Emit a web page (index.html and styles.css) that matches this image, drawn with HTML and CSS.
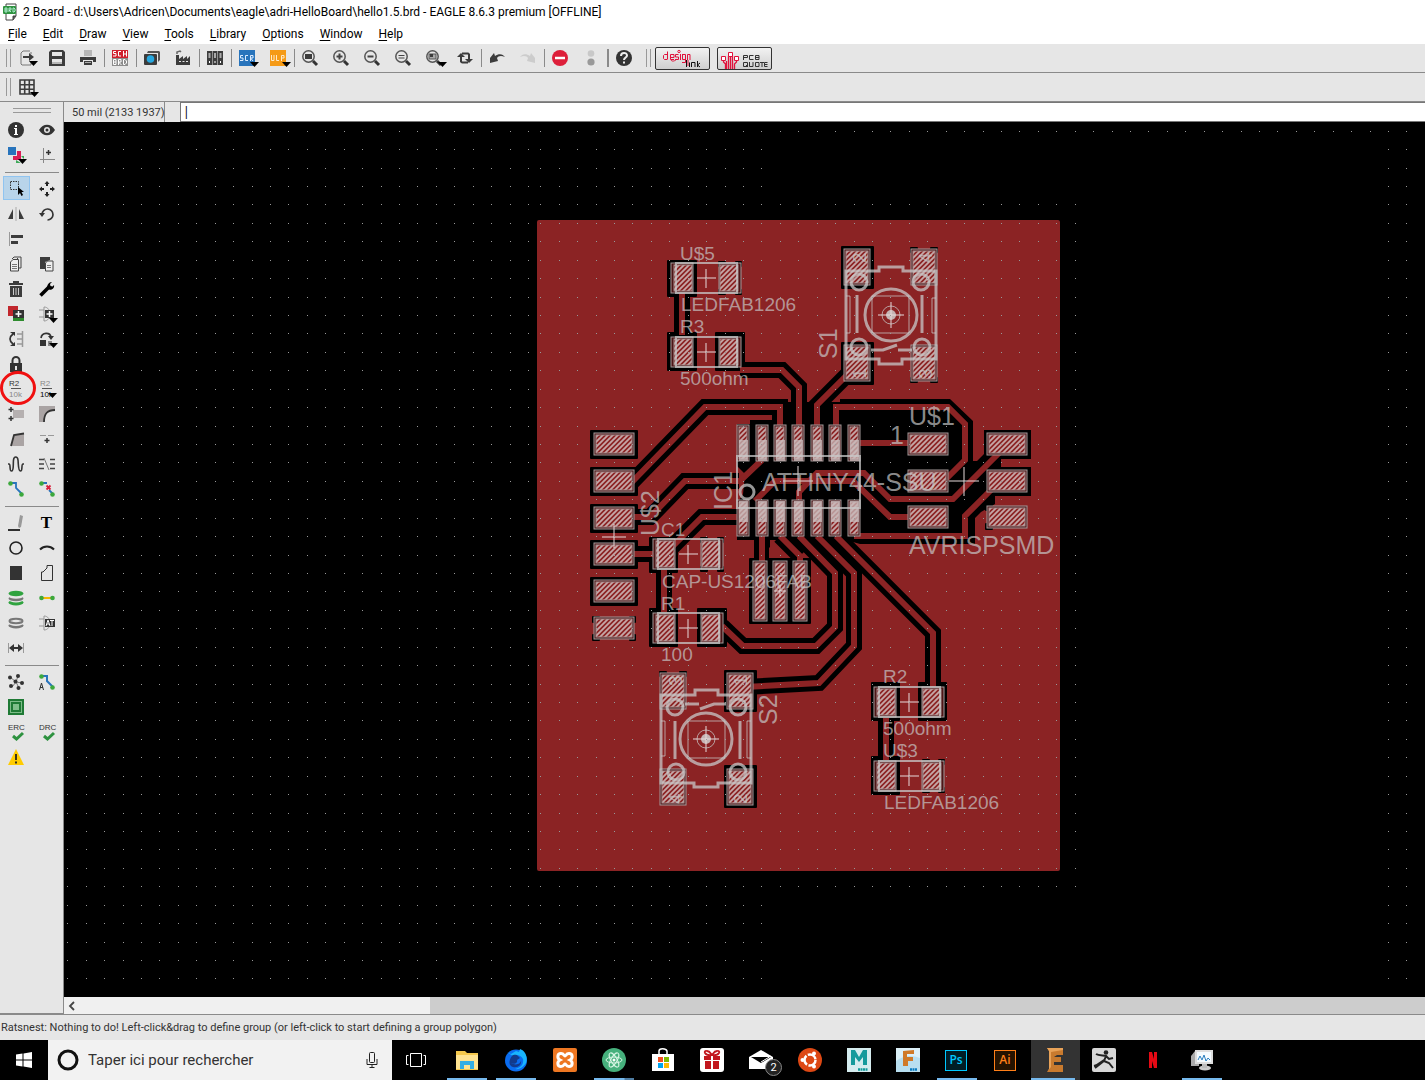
FILE: index.html
```html
<!DOCTYPE html>
<html lang="en">
<head>
<meta charset="utf-8">
<meta name="viewport" content="width=device-width, initial-scale=1">
<title>2 Board - EAGLE 8.6.3 premium</title>
<link rel="stylesheet" href="styles.css">
</head>
<body>
<div class="window">

<header class="titlebar">
  <svg class="app-icon" viewBox="0 0 16 18"><path d="M4 1h10v12l-3 4H4z" fill="#fff" stroke="#444"/><path d="M11 17v-4h3" fill="#555" stroke="#444"/><rect x="1" y="3" width="13" height="8" rx="1" fill="#2e9240"/><path d="M3 5v4M3 5h2v4H3M3 7h2M7 9V5h2v2H7l2 2M11 5h1l1 1v2l-1 1h-1z" stroke="#cfe" fill="none" stroke-width=".8"/></svg>
  <h1>2 Board - d:\Users\Adricen\Documents\eagle\adri-HelloBoard\hello1.5.brd - EAGLE 8.6.3 premium [OFFLINE]</h1>
</header>

<nav class="menubar" aria-label="Main menu">
  <button><u>F</u>ile</button><button><u>E</u>dit</button><button><u>D</u>raw</button><button><u>V</u>iew</button><button><u>T</u>ools</button><button><u>L</u>ibrary</button><button><u>O</u>ptions</button><button><u>W</u>indow</button><button><u>H</u>elp</button>
</nav>

<div class="toolbar" role="toolbar" aria-label="Actions">
  <span class="grip"></span>
  <button class="first" aria-label="Open"><svg viewBox="0 0 16 16"><path d="M10 1H3L1 3v11l1 1h9v-3M11 4V2" fill="none" stroke="#777"/><path d="M3 6h6V3l5 4-5 4V8H3z" fill="#3c3c3c"/><path d="M9 11h9l-4.500 5z" fill="#000"/></svg></button>
  <button aria-label="Save"><svg viewBox="0 0 16 16"><path d="M2 0h12l2 2v14H0V2z" fill="#3c3c3c"/><path d="M3 2h10v4H3zM3 9h10v5H3z" fill="#e6e6e6"/><path d="M3 13h10" stroke="#888"/></svg></button>
  <button aria-label="Print"><svg viewBox="0 0 16 16"><path d="M4 1h8M4 3h8M4 5h8" stroke="#888"/><path d="M0 7h16v5h-3v-2H3v2H0z" fill="#3c3c3c"/><path d="M4 11h8v4H4z" fill="#3c3c3c"/><path d="M5 12.500h6" stroke="#aaa"/></svg></button>
  <span class="sep"></span>
  <button aria-label="Schematic"><svg viewBox="0 0 16 16"><path d="M0 0h16v8H0z" fill="#d0202e"/><path d="M0 8h16v8H0z" fill="#8c8c8c"/><path d="M4 1.500H1.500v2H4v2.500H1M9 1.500H6.500V6H9M11.500 1v5.500M14.500 1v5.500M11.500 4h3M1.500 9.500v5h2.500v-5H1.500M1.500 12h2.500M6.500 15V9.500H9V12H6.500L9.500 15M11.500 9.500v5h1.500l1.500-1.500v-2L13 9.500z" fill="none" stroke="#fff"/></svg></button>
  <span class="sep"></span>
  <button aria-label="CAM processor"><svg viewBox="0 0 16 16"><path d="M4 1h11l1 1v8l-2 2V3H3z" fill="#555"/><rect x="0" y="4" width="13" height="11" rx="1" fill="#3c3c3c"/><circle cx="6.500" cy="9" r="3.800" fill="#27a8e0"/></svg></button>
  <button aria-label="Manufacturing"><svg viewBox="0 0 16 16"><path d="M1 15V5h3v4l4-3v3l4-3v3l3-3v9z" fill="#3c3c3c"/><path d="M2 4V2l3-1 1 1" fill="none" stroke="#666" stroke-width="1.500"/><path d="M4 11.500h9" stroke="#e6e6e6" stroke-dasharray="2 1.500"/></svg></button>
  <span class="sep"></span>
  <button aria-label="Library"><svg viewBox="0 0 16 16"><path d="M0 1h5v14H0zM5.500 1h5v14h-5zM11 1h5v14h-5z" fill="#3c3c3c"/><path d="M1.500 3h2v5h-2zM7 3h2v5H7zM12.500 3h2v5h-2z" fill="#aaa"/><path d="M2 11h1v2H2zM7.500 11h1v2h-1zM13 11h1v2h-1z" fill="#fff"/></svg></button>
  <span class="sep"></span>
  <button aria-label="Run script"><svg viewBox="0 0 16 16"><path d="M0 0h16v16H0z" fill="#2874bc"/><path d="M4 5.500H1.500v2.500H4v2.500H1M9 5.500H6.500v5H9M11.500 11V5.500H14V8h-2.500l2.500 3" fill="none" stroke="#dcecff"/><path d="M11 12h9l-4.500 5z" fill="#000"/></svg></button>
  <button aria-label="Run ULP"><svg viewBox="0 0 16 16"><path d="M0 0h16v16H0z" fill="#f59a16"/><path d="M1.500 5v5.500H4V5M6.500 5v5.500H9M11.500 11V5.500H14V8h-2.500" fill="none" stroke="#ffe9c8"/><path d="M12 12h9l-4.500 5z" fill="#000"/></svg></button>
  <span class="sep"></span>
  <button aria-label="Zoom to fit"><svg viewBox="0 0 16 16"><circle cx="6.500" cy="6.500" r="5.700" class="lens"/><path d="M11 11l4 4" class="handle"/><path d="M3 4h7v5H3z" fill="#3c3c3c"/></svg></button>
  <button aria-label="Zoom in"><svg viewBox="0 0 16 16"><circle cx="6.500" cy="6.500" r="5.700" class="lens"/><path d="M11 11l4 4" class="handle"/><path d="M3.500 6.500h6M6.500 3.500v6" class="ln2"/></svg></button>
  <button aria-label="Zoom out"><svg viewBox="0 0 16 16"><circle cx="6.500" cy="6.500" r="5.700" class="lens"/><path d="M11 11l4 4" class="handle"/><path d="M3.500 6.500h6" class="ln2"/></svg></button>
  <button aria-label="Redraw"><svg viewBox="0 0 16 16"><circle cx="6.500" cy="6.500" r="5.700" class="lens"/><path d="M11 11l4 4" class="handle"/><path d="M3.500 5.500h6M3.500 8h6" class="ln"/></svg></button>
  <button aria-label="Zoom select"><svg viewBox="0 0 16 16"><circle cx="6.500" cy="6.500" r="5.700" class="lens"/><path d="M11 11l4 4" class="handle"/><path d="M3 4h7v5H3z" fill="#aaa" stroke="#555"/><path d="M4 4h3v3H4z" fill="#3c3c3c"/><path d="M12 12h9l-4.500 5z" fill="#000"/></svg></button>
  <button aria-label="Refresh"><svg viewBox="0 0 16 16"><path d="M4 12V5M5 3.500h6a1.500 1.500 0 0 1 1 1.500v2M12 4v6M11 12.500H5.500A1.500 1.500 0 0 1 4 11" fill="none" stroke="#3c3c3c" stroke-width="2"/><path d="M0 7l4-4 4 4zM8 9l4 4 4-4z" fill="#3c3c3c"/></svg></button>
  <span class="sep"></span>
  <button aria-label="Undo"><svg viewBox="0 0 16 16"><path d="M1 8l4-5 1 3c4-3 8-2 10 1-4-2-7-1-8 1l1 3-8 2z" fill="#3c3c3c"/></svg></button>
  <button aria-label="Redo" disabled><svg viewBox="0 0 16 16"><path d="M15 8l-4-5-1 3C6 3 2 4 0 7c4-2 7-1 8 1l-1 3 8 2z" fill="#ccc"/></svg></button>
  <span class="sep"></span>
  <button aria-label="Stop"><svg viewBox="0 0 16 16"><circle cx="8" cy="8" r="8" fill="#dd1f3a"/><path d="M3 8h10" stroke="#fff" stroke-width="2.500"/></svg></button>
  <button aria-label="Go"><svg viewBox="0 0 16 16"><circle cx="8" cy="3.500" r="3.300" fill="#c8c8c8"/><circle cx="8" cy="12" r="3.600" fill="#999"/></svg></button>
  <span class="sep wide"></span>
  <button aria-label="Help"><svg viewBox="0 0 16 16"><circle cx="8" cy="8" r="8" fill="#333"/><path d="M5 6c0-4 6-4 6-.5C11 7.500 8 7.500 8 10" fill="none" stroke="#eee" stroke-width="2"/><path d="M7 11.500h2v2H7z" fill="#eee"/></svg></button>
  <span class="grip"></span>
  <button class="promo" aria-label="design link"><svg viewBox="0 0 53 21"><g fill="none" stroke="#e0123c"><path d="M11.500 3.500v8M11 6.500H8.500l-1 1v3l1 1H11M14 9.500h4v-3h-3.500v5H18M22.500 6.500h-3v2.500h3v2.500h-3.500M24.500 6v6M26 6.500h3.500v8H26M26.500 7v4.500H29M31.500 12V6.500H34V12"/><circle cx="23" cy="3.500" r="1.200"/><path d="M15 12c1 2 4 1 6-1M32 12v6"/></g><path d="M30.500 12v7M33.500 14.500V19M35.500 19v-4.500H39V19M41.500 13v6M44 15l-2.500 2 2.500 2" fill="none" stroke="#111"/></svg></button>
  <button class="promo" aria-label="PCB quote"><svg viewBox="0 0 53 21"><path d="M5.500 10v4l2 2v5M10.500 21V8M12.500 21V6M14.500 21V8M18.500 10v4l-2 2v5M8.500 21v-8" fill="none" stroke="#e0123c" stroke-width="1.300"/><path d="M3.500 8.500h4v4h-4zM10.500 4.500h4v4h-4zM16.500 8.500h4v4h-4z" fill="#fff" stroke="#e0123c"/><path d="M25.500 12V7.500h4v2h-4M35.500 7.500h-4v4h4M37.500 7.500h3.500v4h-3.500zM37.500 9.500H41M29.500 14.500h-4v4h4zM28 17l2 2M31.500 14v4.500h3.500V14M37.500 14.500h3.500v4h-3.500zM42 14.500h4M44 14.500V19M49.500 14.500h-3v4h3M46.500 16.500h3" fill="none" stroke="#333"/></svg></button>
</div>

<div class="toolbar" role="toolbar" aria-label="Grid">
  <span class="grip"></span>
  <button class="first" aria-label="Grid"><svg viewBox="0 0 16 16"><path d="M0 1h14v14H0zM0 5.700h14M0 10.300h14M4.700 1v14M9.300 1v14" fill="none" stroke="#3c3c3c" stroke-width="1.600"/><path d="M10 13h9l-4.500 5z" fill="#000"/></svg></button>
</div>

<main class="work">
  <aside class="palette" role="toolbar" aria-label="Commands">
    <span class="hgrip"></span>
    <div class="tools">
      <button aria-label="Info"><svg viewBox="0 0 16 16"><circle cx="8" cy="8" r="8" fill="#333"/><path d="M7 3h2v2H7zM6 6h3v6h1v1H6v-1h1V7H6z" fill="#fff"/></svg></button>
      <button aria-label="Show"><svg viewBox="0 0 16 16"><path d="M0 8c4-7 12-7 16 0-4 7-12 7-16 0z" fill="#333"/><circle cx="8" cy="8" r="3" fill="#e6e6e6"/><circle cx="8" cy="8" r="1.500" fill="#333"/></svg></button>
      <button aria-label="Layers"><svg viewBox="0 0 16 16"><path d="M0 0h8v8H0z" fill="#2874bc"/><path d="M9 4h4v9H5V9h4z" fill="#d91f55"/><path d="M13 9h3v3M8 13v3h5" fill="#3faa5a"/><path d="M10 12h9l-4.500 5z" fill="#000"/></svg></button>
      <button aria-label="Mark"><svg viewBox="0 0 16 16"><path d="M4.500 1v15M1 12.500h15" stroke="#888"/><path d="M9.500 3v5M7 5.500h5" stroke="#333" stroke-width="1.500"/></svg></button>
      <hr>
      <button class="selected" aria-label="Group"><svg viewBox="0 0 16 16"><path d="M1.500 1.500h8v8h-8z" fill="none" stroke="#333" stroke-dasharray="1.500 1"/><path d="M9 7v8l2-2 1.500 3 1.500-1-1.500-3H15z" fill="#000"/></svg></button>
      <button aria-label="Move"><svg viewBox="0 0 16 16"><path d="M8 0l2.500 3H9v2H7V3H5.500zM8 16l2.500-3H9v-2H7v2H5.500zM0 8l3-2.500V7h2v2H3v1.500zM16 8l-3-2.500V7h-2v2h2v1.500z" fill="#222"/></svg></button>
      <button aria-label="Mirror"><svg viewBox="0 0 16 16"><path d="M0 13L5 3v10zM16 13L11 3v10z" fill="#3c3c3c"/><path d="M8 1v14" stroke="#aaa"/></svg></button>
      <button aria-label="Rotate"><svg viewBox="0 0 16 16"><path d="M3 9V8a5.500 5.500 0 1 1 5.500 6" fill="none" stroke="#333" stroke-width="1.700"/><path d="M0 7h6l-3 4z" fill="#333"/></svg></button>
      <button aria-label="Align"><svg viewBox="0 0 16 16"><path d="M1.500 1v14" stroke="#999"/><path d="M3 4h12v3H3zM3 10h7v3H3z" fill="#3c3c3c"/></svg></button>
      <span></span>
      <button aria-label="Copy"><svg viewBox="0 0 16 16"><path d="M4 3l2-2h7v11h-2M10 3l-1-1" fill="none" stroke="#444"/><path d="M2.500 6L5 3.500h5.500v11.500h-8z" fill="#eee" stroke="#444"/><path d="M4 8.500h5M4 10.500h5M4 12.500h5" stroke="#777"/></svg></button>
      <button aria-label="Paste"><svg viewBox="0 0 16 16"><path d="M1 1h10v3L6 6v7H1z" fill="#3c3c3c"/><path d="M6.500 7l2-2h5.500v10H6.500z" fill="#eee" stroke="#444"/><path d="M8 9.500h4M8 11.500h4" stroke="#777"/></svg></button>
      <button aria-label="Delete"><svg viewBox="0 0 16 16"><path d="M1 2h4V0h6v2h4v2H1zM2 5h12v11H2z" fill="#3c3c3c"/><path d="M5.500 7v7M8 7v7M10.500 7v7" stroke="#ccc"/></svg></button>
      <button aria-label="Change"><svg viewBox="0 0 16 16"><path d="M1.500 14.500L10 6" stroke="#000" stroke-width="3.500"/><path d="M15 4c1 4-4 6-6 4S9 1 13 1l-2 2 .5 2 2 .5z" fill="#000"/></svg></button>
      <button aria-label="Add part"><svg viewBox="0 0 16 16"><path d="M0 0h10v10H0z" fill="#c1272d"/><path d="M5 5h11v10H5z" fill="#2e8b2e"/><path d="M5 4h11v8H5z" fill="#333"/><path d="M10.500 5v6M7.500 8h6" stroke="#fff" stroke-width="1.500"/></svg></button>
      <button aria-label="Replace"><svg viewBox="0 0 16 16"><path d="M0 4h5M0 11h5M5 1c8 0 8 14 0 14z" fill="none" stroke="#999"/><path d="M6 4h9v8H6z" fill="#333"/><path d="M10.500 5v6M7.500 8h6" stroke="#fff" stroke-width="1.500"/><path d="M10 12h9l-4.500 5z" fill="#000"/></svg></button>
      <button aria-label="Pinswap"><svg viewBox="0 0 16 16"><path d="M5 3C1 6 1 10 5 13" fill="none" stroke="#333" stroke-width="1.700"/><path d="M2 1h5v4zM2 15h5v-4z" fill="#333"/><path d="M14.500 0v16M9 3h5M9 8h5M9 13h5" stroke="#999" stroke-width="1.500"/></svg></button>
      <button aria-label="Gateswap"><svg viewBox="0 0 16 16"><path d="M2 7c1-6 9-6 10-1" fill="none" stroke="#333" stroke-width="1.700"/><path d="M9 5h6l-3 4zM1 9h6v6H1z" fill="#333"/><path d="M9 10h4v5H9z" fill="#888"/><path d="M10 12h9l-4.500 5z" fill="#000"/></svg></button>
      <button aria-label="Lock"><svg viewBox="0 0 16 16"><path d="M2 7h12v9H2z" fill="#333"/><path d="M4.500 8V4.500a3.500 3.500 0 0 1 7 0V8" fill="none" stroke="#333" stroke-width="2"/><path d="M8 10v4" stroke="#e6e6e6" stroke-width="2"/></svg></button>
      <span></span>
      <button class="marked" aria-label="Name"><svg viewBox="0 0 16 16"><path d="M3 7.500h10" stroke="#555"/><text x="1" y="5">R2</text><text x="1" y="16" class="dim">10k</text></svg></button>
      <button aria-label="Value"><svg viewBox="0 0 16 16"><path d="M3 7.500h10" stroke="#555"/><text x="1" y="5" class="dim">R2</text><text x="1" y="16" class="dark">10k</text><path d="M9 12h9l-4.500 5z" fill="#000"/></svg></button>
      <button aria-label="Smash"><svg viewBox="0 0 16 16"><path d="M5 4h11v8H5z" fill="#b5b0b0"/><path d="M3 1v5M.500 3.500h5M3 10v5M.500 12.500h5" stroke="#333" stroke-width="1.500"/></svg></button>
      <button aria-label="Miter"><svg viewBox="0 0 16 16"><path d="M0 0h16v4C8 4 5 8 5 16H0z" fill="#aaa4a4"/><path d="M16 4C8 4 5 8 5 16" fill="none" stroke="#333" stroke-width="1.800"/></svg></button>
      <button aria-label="Split"><svg viewBox="0 0 16 16"><path d="M3 15L6 4l10-1v12z" fill="#aaa4a4"/><path d="M3 15L6 4l10-1.500" fill="none" stroke="#333" stroke-width="1.800"/></svg></button>
      <button aria-label="Optimize"><svg viewBox="0 0 16 16"><path d="M1 4.500h6M9 4.500h6" stroke="#999"/><path d="M8 7v5M5.500 9.500h5" stroke="#333" stroke-width="1.500"/></svg></button>
      <button aria-label="Meander"><svg viewBox="0 0 16 16"><path d="M0 8h1c2 0 0 7 2.500 7S5 8 5.500 4s4-4 4.500 0 0 11 2.500 11S13 8 15 8h1" fill="none" stroke="#333" stroke-width="1.600"/></svg></button>
      <button aria-label="Fanout"><svg viewBox="0 0 16 16"><path d="M0 3.500h5M0 8h5M0 12.500h5M11 3.500h5M11 8h5M11 12.500h5" stroke="#444" stroke-width="1.500"/><path d="M5 2l5 12" stroke="#777"/></svg></button>
      <button aria-label="Route"><svg viewBox="0 0 16 16"><path d="M2 2h6v5l6 6" fill="none" stroke="#2874bc" stroke-width="1.800"/><circle cx="2.500" cy="2.500" r="2.300" fill="#3ca83c"/><circle cx="13.500" cy="13.500" r="2.300" fill="#3ca83c"/></svg></button>
      <button aria-label="Ripup"><svg viewBox="0 0 16 16"><path d="M2 2h6M10 9l4 4" fill="none" stroke="#2874bc" stroke-width="1.800"/><circle cx="2.500" cy="2.500" r="2.300" fill="#3ca83c"/><circle cx="13.500" cy="13.500" r="2.300" fill="#3ca83c"/><path d="M7.500 4.500l4 4M11.500 4.500l-4 4" stroke="#d91f3c" stroke-width="1.800"/></svg></button>
      <hr>
      <button aria-label="Line"><svg viewBox="0 0 16 16"><path d="M0 15h12" stroke="#000" stroke-width="1.600"/><path d="M12 0l3 1-2 11-2 1-1-2z" fill="#999"/></svg></button>
      <button class="letter" aria-label="Text">T</button>
      <button aria-label="Circle"><svg viewBox="0 0 16 16"><circle cx="8" cy="8" r="6" fill="none" stroke="#222" stroke-width="1.600"/></svg></button>
      <button aria-label="Arc"><svg viewBox="0 0 16 16"><path d="M1 9.500c4-4 10-4 14 0" fill="none" stroke="#222" stroke-width="2"/></svg></button>
      <button aria-label="Rectangle"><svg viewBox="0 0 16 16"><path d="M2 1h12v14H2z" fill="#333"/></svg></button>
      <button aria-label="Polygon"><svg viewBox="0 0 16 16"><path d="M2.500 15.500V7H4l4-4V.500h5.500v15z" fill="none" stroke="#333"/></svg></button>
      <button aria-label="Via"><svg viewBox="0 0 16 16"><ellipse cx="8" cy="12.500" rx="7.500" ry="3" fill="#2fa33f"/><ellipse cx="8" cy="9.500" rx="7.500" ry="3" fill="#e6e6e6"/><ellipse cx="8" cy="8.500" rx="7.500" ry="2.800" fill="#777"/><ellipse cx="8" cy="6" rx="7.500" ry="2.800" fill="#e6e6e6"/><ellipse cx="8" cy="3.500" rx="7.500" ry="2.800" fill="#2fa33f"/></svg></button>
      <button aria-label="Signal"><svg viewBox="0 0 16 16"><path d="M2 8h12" stroke="#f5b800" stroke-width="2"/><circle cx="2.500" cy="8" r="2.300" fill="#3ca83c"/><circle cx="13.500" cy="8" r="2.300" fill="#3ca83c"/></svg></button>
      <button aria-label="Hole"><svg viewBox="0 0 16 16"><ellipse cx="8" cy="10.500" rx="7.500" ry="3" fill="#777"/><ellipse cx="8" cy="8" rx="7.500" ry="3" fill="#e6e6e6"/><ellipse cx="8" cy="6" rx="6.500" ry="2.200" fill="none" stroke="#777" stroke-width="2"/></svg></button>
      <button aria-label="Attribute"><svg viewBox="0 0 16 16"><path d="M0 4h5M0 11h5M5 1c8 0 8 14 0 14z" fill="none" stroke="#999"/><path d="M6 4h10v8H6z" fill="#333"/><path d="M7 11l2-6 2 6M8 9h2M11 5.500h4M13 5.500V11" fill="none" stroke="#fff"/></svg></button>
      <button aria-label="Dimension"><svg viewBox="0 0 16 16"><path d="M.500 3v10M15.500 3v10" stroke="#999"/><path d="M1 8l5-4v3h4V4l5 4-5 4V9H6v3z" fill="#333"/></svg></button>
      <span></span>
      <hr>
      <button aria-label="Ratsnest"><svg viewBox="0 0 16 16"><path d="M2 3l6 5 2-6M8 8l6 1M8 8l-4 5M8 8l3 6" fill="none" stroke="#777"/><g fill="#333"><circle cx="2" cy="3.500" r="2"/><circle cx="10" cy="2" r="2"/><circle cx="14" cy="9" r="2"/><circle cx="7.500" cy="7.500" r="2"/><circle cx="3" cy="12" r="2"/><circle cx="10.500" cy="14" r="2"/></g></svg></button>
      <button aria-label="Autorouter"><svg viewBox="0 0 16 16"><path d="M2 2h6v5l6 6" fill="none" stroke="#2874bc" stroke-width="2"/><circle cx="2.500" cy="2.500" r="2.300" fill="#3ca83c"/><circle cx="13.500" cy="13.500" r="2.300" fill="#3ca83c"/><path d="M.500 16l2-7 2 7M1 13.500h3" fill="none" stroke="#333"/></svg></button>
      <button aria-label="Layer stack"><svg viewBox="0 0 16 16"><path d="M0 0h16v16H0z" fill="#1f7a35"/><path d="M2.500 2.500h11v11h-11z" fill="none" stroke="#dfd" stroke-dasharray="1 1"/><path d="M5 5h6v6H5z" fill="#7fbf8a"/></svg></button>
      <span></span>
      <button aria-label="ERC"><svg viewBox="0 0 16 16"><text x="0" y="6">ERC</text><path d="M5 12l3.500 3L15 9" fill="none" stroke="#2e9240" stroke-width="3"/></svg></button>
      <button aria-label="DRC"><svg viewBox="0 0 16 16"><text x="0" y="6">DRC</text><path d="M5 12l3.500 3L15 9" fill="none" stroke="#2e9240" stroke-width="3"/></svg></button>
      <button aria-label="Errors"><svg viewBox="0 0 16 16"><path d="M8 0l8 16H0z" fill="#fc0"/><path d="M8 5v6M8 12.500v2" stroke="#222" stroke-width="1.800"/></svg></button>
    </div>
  </aside>

  <section class="editor">
    <div class="command">
      <output class="coords">50 mil (2133 1937)</output>
      <input class="cmd" type="text" aria-label="Command line" value="|">
    </div>
    <svg class="board" role="img" aria-label="Board layout">
      <defs>
        <pattern id="dots" x="540" y="223" width="129" height="129" patternUnits="userSpaceOnUse">
          <path d="M0 .500h1m18 0h1m17 0h1m18 0h1m17 0h1m17 0h1m18 0h1M0 18.500h1m18 0h1m17 0h1m18 0h1m17 0h1m17 0h1m18 0h1M0 37.500h1m18 0h1m17 0h1m18 0h1m17 0h1m17 0h1m18 0h1M0 55.500h1m18 0h1m17 0h1m18 0h1m17 0h1m17 0h1m18 0h1M0 74.500h1m18 0h1m17 0h1m18 0h1m17 0h1m17 0h1m18 0h1M0 92.500h1m18 0h1m17 0h1m18 0h1m17 0h1m17 0h1m18 0h1M0 110.500h1m18 0h1m17 0h1m18 0h1m17 0h1m17 0h1m18 0h1" stroke="#999"/>
        </pattern>
        <pattern id="dots-left" href="#dots" x="67"/>
        <pattern id="hatch" width="5" height="5" patternUnits="userSpaceOnUse">
          <rect width="5" height="5" fill="#8b2324"/><path d="M-1 1l2-2M-1 6L6-1M4 6l2-2" stroke="#c6a8a8" stroke-width="1.800"/>
        </pattern>
        <g id="pad-h"><rect x="-20" y="-11" width="40" height="22" class="pad"/><rect x="-18" y="-9" width="36" height="18" class="pad-in"/></g>
        <g id="pad-t"><rect x="-6" y="-18" width="12" height="36" class="pad"/><rect x="-4" y="-16" width="8" height="32" class="pad-in"/></g>
        <g id="pad-s"><rect x="-13" y="-18" width="26" height="36" class="pad"/><rect x="-11" y="-16" width="22" height="32" class="pad-in"/></g>
        <g id="pad-l"><rect x="-7" y="-30" width="14" height="60" class="pad"/><rect x="-5" y="-28" width="10" height="56" class="pad-in"/></g>
        <g id="chip">
          <rect x="-35" y="-15" width="22" height="30" class="pad"/><rect x="-32" y="-13" width="18" height="26" class="pad-in"/>
          <rect x="13" y="-15" width="22" height="30" class="pad"/><rect x="14" y="-13" width="18" height="26" class="pad-in"/>
          <rect x="-30" y="-15" width="61" height="30" class="silk2"/><path d="M-9 0H10M0-9V10" class="cross"/>
        </g>
        <g id="switch">
          <use href="#pad-s" x="-34" y="-48"/><use href="#pad-s" x="33" y="-48"/><use href="#pad-s" x="-34" y="48"/><use href="#pad-s" x="33" y="48"/>
          <path d="M-45-44v88h33v5h23v-5h34v-88H12v-4h-24v4z" class="silk3"/>
          <path d="M-34-20v38M31-20v38M-20 35h12l14-5M7 35h14" class="silk3"/>
          <circle r="26" class="silk3"/><path d="M-19-19h37v37h-37zM-45-19h4v37h-4M45-17h-4v35h4" class="silk1"/>
          <circle cx="-32" cy="-33" r="8" class="silk3"/><circle cx="30" cy="-33" r="8" class="silk3"/><circle cx="-32" cy="32" r="8" class="silk3"/><circle cx="31" cy="32" r="8" class="silk3"/>
          <circle r="9" class="silk1"/><circle r="5" fill="#c4b4b4"/><path d="M-13 0h26M0-13v26" class="cross"/>
        </g>
      </defs>
      <g transform="translate(-64 -122)">
        <rect x="537" y="220" width="523" height="651" rx="2" class="copper"/>

        <path class="void" d="M737 424h13v-4h30v-18h60v-3h110l23 22v40h4l7-7v-24h47v29h-30v8h30v29h-36v8l-14 8-6 6v26H860l-14-4h-109v-36l6-10 2-20-8-8z"/>
        <g class="halo">
          <path d="M668 261h28v35h-28zM668 333h28v37h-28zM716 333h28v37h-28zM650 538h27v34h-27zM650 609h27v37h-27zM698 609h28v37h-28z"/>
          <path d="M872 683h27v37h-27zM919 683h27v37h-27zM872 757h27v37h-27z"/>
          <path d="M842 247h31v41h-31zM842 343h31v41h-31zM725 671h31v40h-31zM725 766h31v41h-31z"/>
          <path d="M591 431h46v27h-46zM591 468h46v27h-46zM591 505h46v27h-46zM591 541h46v27h-46zM591 578h46v27h-46z"/>
          <path d="M750 559h60v64h-60z"/>
          <path d="M719 262h6v4h-6zM736 262h5v4h-5zM719 290h6v4h-6zM736 290h5v4h-5zM701 538h6v4h-6zM718 538h5v4h-5zM701 567h6v4h-6zM718 567h5v4h-5zM923 760h6v4h-6zM939 760h5v4h-5zM923 788h6v4h-6zM939 788h5v4h-5zM593 617h6v5h-6zM593 635h6v5h-6zM630 617h5v5h-5zM630 635h5v5h-5zM911 248h6v4h-6zM931 248h6v4h-6zM911 378h6v4h-6zM931 378h6v4h-6zM660 672h6v4h-6zM680 672h6v4h-6zM986 506h6v4h-6zM986 524h6v5h-6z"/>
        </g>
        <g class="gap">
          <path d="M682 290v45M740 370h42l17 17v30M632 482l73-75h75v20M632 517h18l35-36h54M743 517h-41l-32 32M632 554h30M664 570v42"/>
          <path d="M817 430v-25l33-33M836 536l97 97v57M817 536l37 37v73l-35 37-74 4M799 536l36 37v54l-19 19h-73l-21-20M762 530v35M780 536l20 20M886 718v42"/>
        </g>
        <path d="M769 548l5-5 15 15h-20z" class="copper"/>
        <g class="trace">
          <path d="M682 290v45M740 370h42l17 17v40M632 482l73-75h75v20M632 517h18l35-36h55l22-21M743 517h-41l-32 32M632 554h30M664 570v42"/>
          <path d="M817 430v-25l33-33M836 536l97 97v57M817 536l37 37v73l-35 37-74 4M799 536l36 37v54l-19 19h-73l-21-20M762 530v35M780 536l20 20v8M886 718v42"/>
          <path d="M836 430v-23h112l17 17v36l-20 20M854 443h56M854 536h111v-20l28-28M799 505v-13l18-19h47l26 26h63l47-47M755 501l20-20h78l37 36h20"/>
        </g>

        <use href="#pad-h" x="614" y="444"/><use href="#pad-h" x="614" y="481"/><use href="#pad-h" x="614" y="518"/><use href="#pad-h" x="614" y="554"/><use href="#pad-h" x="614" y="591"/><use href="#pad-h" x="614" y="628"/>
        <use href="#pad-h" x="928" y="444"/><use href="#pad-h" x="928" y="481"/><use href="#pad-h" x="928" y="517"/>
        <use href="#pad-h" x="1007" y="444"/><use href="#pad-h" x="1007" y="481"/><use href="#pad-h" x="1007" y="517"/>
        <use href="#pad-t" x="743" y="443"/><use href="#pad-t" x="762" y="443"/><use href="#pad-t" x="780" y="443"/><use href="#pad-t" x="798" y="443"/><use href="#pad-t" x="817" y="443"/><use href="#pad-t" x="835" y="443"/><use href="#pad-t" x="854" y="443"/>
        <use href="#pad-t" x="743" y="518"/><use href="#pad-t" x="762" y="518"/><use href="#pad-t" x="780" y="518"/><use href="#pad-t" x="798" y="518"/><use href="#pad-t" x="817" y="518"/><use href="#pad-t" x="835" y="518"/><use href="#pad-t" x="854" y="518"/>
        <path class="leads" d="M739 440h9v21h-9zM758 440h9v21h-9zM776 440h9v21h-9zM794 440h9v21h-9zM813 440h9v21h-9zM831 440h9v21h-9zM850 440h9v21h-9zM739 501h9v21h-9zM758 501h9v21h-9zM776 501h9v21h-9zM794 501h9v21h-9zM813 501h9v21h-9zM831 501h9v21h-9zM850 501h9v21h-9z"/>
        <use href="#pad-l" x="760" y="591"/><use href="#pad-l" x="780" y="591"/><use href="#pad-l" x="800" y="591"/>
        <use href="#chip" x="706" y="278"/><use href="#chip" x="706" y="352"/><use href="#chip" x="688" y="554"/><use href="#chip" x="688" y="628"/><use href="#chip" x="909" y="702"/><use href="#chip" x="909" y="776"/>
        <use href="#switch" x="891" y="315"/><use href="#switch" transform="translate(706 739) rotate(180)"/>
        <rect x="737" y="456" width="123" height="52" class="silk2"/><circle cx="747" cy="492" r="7" class="silk3"/>
        <path class="cross" d="M602 537h24M614 524v24M783 481h30M798 466v30M949 481h30M964 467v29M774 591h12M780 585v12"/>

        <g class="label">
          <text x="680" y="260">U$5</text><text x="681" y="311">LEDFAB1206</text><text x="680" y="333">R3</text><text x="680" y="385">500ohm</text>
          <text x="661" y="536">C1</text><text x="662" y="588">CAP-US1206FAB</text><text x="661" y="610">R1</text><text x="661" y="661">100</text>
          <text x="883" y="683">R2</text><text x="883" y="735">500ohm</text><text x="883" y="757">U$3</text><text x="884" y="809">LEDFAB1206</text>
        </g>
        <g class="label big">
          <text x="890" y="444">1</text><text x="909" y="425">U$1</text><text x="909" y="554">AVRISPSMD</text><text x="762" y="491">ATTINY44-SSU</text>
          <text transform="translate(659 536) rotate(-90)">U$2</text><text transform="translate(732 510) rotate(-90)">IC1</text><text transform="translate(837 359) rotate(-90)">S1</text><text transform="translate(777 725) rotate(-90)">S2</text>
        </g>
        <g class="label">
          <text transform="translate(866 263) rotate(-90)">2</text><text transform="translate(932 263) rotate(-90)">4</text><text transform="translate(866 379) rotate(-90)">1</text><text transform="translate(932 379) rotate(-90)">3</text>
          <text transform="translate(682 686) rotate(-90)">3</text><text transform="translate(747 686) rotate(-90)">1</text><text transform="translate(682 804) rotate(-90)">4</text><text transform="translate(747 804) rotate(-90)">2</text>
        </g>
        <rect x="64" y="122" width="473" height="100%" fill="url(#dots-left)"/>
        <path d="M537 122h888v18H780v64h296v689H780v104H537z" fill="url(#dots)"/>
        <rect x="1375" y="140" width="100%" height="100%" fill="url(#dots)"/>
      </g>
    </svg>
    <div class="scroll"><button aria-label="Scroll left"><svg viewBox="0 0 8 8"><path d="M5 0L1 4l4 4" fill="none" stroke="#444" stroke-width="1.800"/></svg></button><span class="track"></span><span class="thumb"></span></div>
  </section>
</main>

<footer class="status">Ratsnest: Nothing to do! Left-click&amp;drag to define group (or left-click to start defining a group polygon)</footer>

<div class="taskbar">
  <button class="start" aria-label="Start"><svg viewBox="0 0 16 16"><path d="M0 2.500L6.500 1.500v6H0zM7.500 1.400L16 0v7.500H7.500zM0 8.500h6.500v6L0 13.500zM7.500 8.500H16V16l-8.500-1.400z" fill="#fff"/></svg></button>
  <label class="search"><svg class="ring" viewBox="0 0 22 22"><circle cx="11" cy="11" r="9" fill="none" stroke="#111" stroke-width="3"/></svg><input type="text" aria-label="Search" placeholder="Taper ici pour rechercher"><svg class="mic" viewBox="0 0 12 16"><rect x="3.500" y=".500" width="5" height="10" rx="1" fill="none" stroke="#222"/><path d="M1 7v5.500h10V7M6 13v3M3.500 15.500h5" fill="none" stroke="#222"/></svg></label>
  <button class="view" aria-label="Task view"><svg viewBox="0 0 20 16"><path d="M4.500 1.500h11v13h-11zM2.500 3.500h-2v9h2M17.500 3.500h2v9h-2" fill="none" stroke="#fff"/></svg></button>
  <div class="apps">
    <button class="open" aria-label="Explorer"><svg viewBox="0 0 24 24"><path d="M1 3h9l2 2h11v17H1z" fill="#f5c84c"/><path d="M1 7h22v14H1z" fill="#ffe391"/><path d="M5 21v-8h14v8h-4v-4H9v4z" fill="#35aee4"/></svg></button>
    <button class="open" aria-label="Firefox"><svg viewBox="0 0 24 24"><circle cx="12" cy="12.500" r="11" fill="#0a6cf0"/><path d="M3 4l4 2 5-3 3 1 1-3c6 2 8 9 6 14-2 3-6 7-11 6 6-1 9-5 8-10-2-4-7-5-10-3z" fill="#19b5fe"/><path d="M8 8c2-2 5-1 6 0l2 2-3 2c1 3-3 5-6 3 5 3 10 1 10-3 1 5-3 8-8 7-4-1-5-6-1-11z" fill="#123a8c"/></svg></button>
    <button aria-label="XAMPP"><svg viewBox="0 0 24 24"><rect width="24" height="24" rx="2" fill="#ee7722"/><path d="M8 5.500c-4 0-4 5-1 6.500-3 1.500-3 6.500 1 6.500 3 0 3-2.500 4-2.500s1 2.500 4 2.500c4 0 4-5 1-6.500 3-1.500 3-6.500-1-6.500-3 0-3 2.500-4 2.500S11 5.500 8 5.500z" fill="none" stroke="#fff" stroke-width="3"/></svg></button>
    <button class="open many" aria-label="Atom"><svg viewBox="0 0 24 24"><circle cx="12" cy="12" r="12" fill="#46b07c"/><g fill="none" stroke="#d8f5e4"><ellipse cx="12" cy="12" rx="8" ry="3"/><ellipse cx="12" cy="12" rx="8" ry="3" transform="rotate(60 12 12)"/><ellipse cx="12" cy="12" rx="8" ry="3" transform="rotate(120 12 12)"/></g><circle cx="12" cy="12" r="1.500" fill="#fff"/></svg></button>
    <button aria-label="Store"><svg viewBox="0 0 24 24"><path d="M8 7V3c0-3 7-3 8 0v4" fill="none" stroke="#fff" stroke-width="1.500"/><path d="M1 6h22v17H1z" fill="#fff"/><path d="M7 9h5v5H7z" fill="#f25022"/><path d="M13 9h5v5h-5z" fill="#7fba00"/><path d="M7 15h5v5H7z" fill="#00a4ef"/><path d="M13 15h5v5h-5z" fill="#ffb900"/></svg></button>
    <button aria-label="Gifts"><svg viewBox="0 0 24 24"><rect width="24" height="24" rx="3" fill="#fff"/><path d="M4 8h7v4H4zM13 8h7v4h-7zM5 13h6v8H5zM13 13h6v8h-6z" fill="#c2171e"/><path d="M12 7C4 8 3 2 7 3c3 0 4 3 5 4 1-1 2-4 5-4 4-1 3 5-5 4z" fill="none" stroke="#c2171e" stroke-width="1.800"/></svg></button>
    <button class="mail" aria-label="Mail"><svg viewBox="0 0 24 24"><path d="M0 9l12-7 12 7v12H0z" fill="#fff"/><path d="M2 9h20l-10 6z" fill="#000"/><path d="M12 14l10-6" stroke="#fff"/></svg><span class="badge">2</span></button>
    <button aria-label="Ubuntu"><svg viewBox="0 0 24 24"><circle cx="12" cy="12" r="12" fill="#dd4814"/><circle cx="12" cy="12" r="5.500" fill="none" stroke="#fff" stroke-width="2.500" stroke-dasharray="10 1.500"/><circle cx="4.500" cy="12" r="2" fill="#fff"/><circle cx="16" cy="5.500" r="2" fill="#fff"/><circle cx="16" cy="18.500" r="2" fill="#fff"/></svg></button>
    <button aria-label="Maya"><svg viewBox="0 0 24 24"><path d="M0 0h24v24H0z" fill="#d5ecef"/><path d="M4 17V2h4l4 7 4-7h4v15h-4V9l-4 5-4-5v8z" fill="#159a9c"/><path d="M11 21.500h10" stroke="#159a9c" stroke-width="2.500" stroke-dasharray="2 .5"/></svg></button>
    <button aria-label="Fusion 360"><svg viewBox="0 0 24 24"><path d="M0 0h24v24H0z" fill="#dcf0f8"/><path d="M0 13c8-6 16-6 24-3v14H0z" fill="#b8dff0"/><path d="M7 18V3l11-1v4h-7v3h6v4h-5v5z" fill="#d07a28"/><path d="M14 21.500h7" stroke="#0a7cc0" stroke-width="2.500" stroke-dasharray="2 .5"/></svg></button>
    <button class="open adobe ps" aria-label="Photoshop"><span>Ps</span></button>
    <button class="adobe ai" aria-label="Illustrator"><span>Ai</span></button>
    <button class="active" aria-label="EAGLE"><svg viewBox="0 0 24 24"><path d="M4 0h16v7h-6L11 9h7v5h-7v3h9v7H4l2-3V3z" fill="#c87a2e"/><path d="M4 0h16v2L8 4v15l-4 5 2-3V3z" fill="#e8a258"/></svg></button>
    <button aria-label="Runner"><svg viewBox="0 0 24 24"><rect width="24" height="24" rx="2" fill="#d8d8d8"/><circle cx="14" cy="4.500" r="2.300" fill="#222"/><path d="M4 6c3 2 8 1 10 2l-2 5-9 7M12 13l5 2 4 5M14 8l3 3 4-1M2 18c4-1 7-4 10-6" fill="none" stroke="#222" stroke-width="2"/></svg></button>
    <button aria-label="Netflix"><svg viewBox="0 0 24 24"><path d="M8 4h3l2 7V4h3v16h-3l-2-7v7H8z" fill="#e50914"/></svg></button>
    <button class="open" aria-label="System monitor"><svg viewBox="0 0 24 24"><path d="M1 8l4-5h4v15H1z" fill="#aaa"/><path d="M5 2h18v14H5z" fill="#ddd"/><path d="M7 4h14v10H7z" fill="#f4fbff"/><path d="M8 12l2-4 2 4 2-5 2 6 2-3 2 2" fill="none" stroke="#2a7fc0"/><ellipse cx="15" cy="20" rx="6" ry="2.500" fill="#ccc"/><path d="M12 16h5v4h-5z" fill="#bbb"/></svg></button>
  </div>
</div>

</div>
</body>
</html>
```
FILE: styles.css
```css
*, *::before, *::after { box-sizing: border-box; }

body {
  margin: 0;
  background: #e6e6e6;
  color: #000;
  font: 12px/16px Roboto, "Noto Sans", sans-serif;
}

button {
  margin: 0;
  padding: 0;
  border: 0;
  background: none;
  color: inherit;
  font: inherit;
}

svg { display: block; overflow: visible; }

.window {
  display: flex;
  flex-direction: column;
  min-height: 100vh;
}

/* title and menu */
.titlebar {
  display: flex;
  align-items: center;
  gap: 5px;
  height: 24px;
  padding-left: 2px;
  background: #fff;
}
.app-icon { width: 16px; height: 18px; }
h1 { margin: 0; font-size: 12px; font-weight: 400; line-height: 16px; white-space: nowrap; }

.menubar {
  display: flex;
  gap: 16px;
  height: 20px;
  padding-left: 8px;
  background: #fff;
}
.menubar u { text-underline-offset: 2px; }

/* toolbars */
.toolbar {
  display: flex;
  align-items: center;
  height: 29px;
  border-bottom: 1px solid #8a8a8a;
}
.toolbar button {
  display: grid;
  place-items: center start;
  width: 31px;
  height: 26px;
  padding-left: 7px;
}
.toolbar svg { width: 16px; height: 16px; }
.toolbar .first { width: 29px; }
.grip {
  width: 5px;
  height: 18px;
  margin: 0 2px 0 6px;
  border: solid #999;
  border-width: 0 1px;
}
.sep { width: 1px; height: 18px; background: #8a8a8a; }
.sep.wide { width: 2px; }
.toolbar .promo {
  width: 55px;
  height: 23px;
  margin: 0 5px 0 2px;
  padding: 0;
  border: 1px solid #333;
  border-radius: 2px;
  background: linear-gradient(#f2f2f2, #cfcfcf);
}
.toolbar .promo svg { width: 53px; height: 21px; }

.lens { fill: #e6e6e6; stroke: #555; stroke-width: 1.5px; }
.handle { stroke: #333; stroke-width: 3px; }
.ln { stroke: #444; }
.ln2 { stroke: #444; stroke-width: 2px; }

/* left palette */
.work { display: flex; flex: 1; }
.palette {
  width: 64px;
  border-right: 1px solid #8a8a8a;
  border-bottom: 1px solid #8a8a8a;
}
.hgrip {
  display: block;
  width: 38px;
  height: 5px;
  margin: 6px 0 4px 13px;
  border: solid #999;
  border-width: 1px 0;
}
.tools {
  display: grid;
  grid-template-columns: 31px 31px;
}
.tools button {
  display: grid;
  place-items: center;
  height: 25px;
}
.tools svg { width: 16px; height: 16px; }
.tools text { font: 8px "Liberation Sans", sans-serif; fill: #333; }
.tools .dim { fill: #888; }
.tools .dark { fill: #000; }
.tools hr {
  grid-column: 1 / -1;
  width: 54px;
  height: 1px;
  margin: 5px 0 3px 5px;
  border: 0;
  background: #8a8a8a;
}
.tools .selected {
  width: 27px;
  height: 24px;
  margin-left: 3px;
  border: 1px solid #90c4f0;
  background: #b8d4ea;
}
.tools .letter { font: 700 17px/25px "Liberation Serif", serif; }
.marked { position: relative; }
.marked::after {
  content: "";
  position: absolute;
  left: 0;
  top: -5px;
  width: 36px;
  height: 34px;
  border: 3px solid #f01010;
  border-radius: 50%;
}

/* editor */
.editor { display: flex; flex: 1; flex-direction: column; min-width: 0; }
.command { display: flex; height: 20px; }
.coords {
  width: 101px;
  padding-left: 8px;
  border-right: 1px solid #8a8a8a;
  color: #333;
  font-size: 11px;
  line-height: 22px;
  white-space: nowrap;
}
.cmd {
  flex: 1;
  min-width: 0;
  margin-left: 15px;
  padding: 0 2px;
  border: 1px solid #777;
  border-right: 0;
  background: #fff;
  font: 12px/16px "Noto Sans", sans-serif;
}
.board { flex: 1; width: 100%; min-height: 480px; overflow: hidden; background: #000; }
.scroll { display: flex; height: 17px; background: #f0f0f0; }
.scroll button { display: grid; place-items: center; width: 17px; }
.scroll svg { width: 8px; height: 8px; }
.track { flex: 349; }
.thumb { flex: 995; background: #cdcdcd; }

/* board artwork */
.copper { fill: #8b2324; }
.void { fill: #000; }
.halo { fill: #000; stroke: #000; stroke-width: 2px; stroke-linejoin: round; }
.gap { fill: none; stroke: #000; stroke-width: 16px; }
.trace { fill: none; stroke: #8b2324; stroke-width: 6px; }
.pad { fill: #4d1516; stroke: #a39a9a; }
.pad-in { fill: url(#hatch); stroke: #a89090; }
.leads { fill: #c9bcbc; opacity: .75; }
.silk1, .silk2, .silk3 { fill: none; stroke: #c8c8c8; stroke-opacity: .75; }
.silk2 { stroke-width: 2px; }
.silk3 { stroke-width: 3px; }
.cross { fill: none; stroke: #e6dada; }
.label { fill: #c8c8c8; fill-opacity: .7; font: 19px "Liberation Sans", Arial, sans-serif; }
.big { font-size: 25px; }

.status {
  height: 26px;
  padding: 0 1px;
  border-top: 1px solid #8a8a8a;
  color: #333;
  font-size: 11px;
  line-height: 26px;
  white-space: nowrap;
}

/* taskbar */
.taskbar { display: flex; height: 40px; background: #000; }
.start, .view { display: grid; place-items: center; width: 48px; }
.start svg { width: 16px; height: 16px; }
.view svg { width: 20px; height: 16px; }
.search {
  display: flex;
  align-items: center;
  gap: 9px;
  width: 344px;
  padding: 0 14px 0 9px;
  background: #f2f2f2;
}
.search input {
  flex: 1;
  min-width: 0;
  padding: 0;
  border: 0;
  background: none;
  font: 15px/20px Roboto, "Noto Sans", sans-serif;
}
.search input::placeholder { color: #333; opacity: 1; }
.ring { width: 22px; height: 22px; }
.mic { width: 12px; height: 16px; }
.apps { display: flex; padding-left: 3px; }
.apps button {
  position: relative;
  display: grid;
  place-items: center start;
  width: 49px;
  padding-left: 12px;
}
.apps svg { width: 24px; height: 24px; }
.apps .open::after, .apps .active::after {
  content: "";
  position: absolute;
  left: 4px;
  right: 5px;
  bottom: 0;
  height: 2px;
  background: #76b9ed;
}
.apps .many::after { background: linear-gradient(90deg, #76b9ed 30px, #4f7da3 31px); }
.apps .active { background: #333; }
.apps .active::after { left: 0; }
.badge {
  position: absolute;
  left: 28px;
  top: 19px;
  width: 17px;
  height: 17px;
  border: 1px solid #888;
  border-radius: 50%;
  background: #222;
  color: #fff;
  font-size: 11px;
  line-height: 15px;
}
.adobe span {
  width: 22px;
  height: 21px;
  border: 1px solid;
  font: 600 12px/18px "Open Sans", sans-serif;
}
.ps span { border-color: #00c8ff; background: #001d26; color: #00c8ff; }
.ai span { border-color: #ff7f18; background: #261300; color: #ff7f18; }
```
